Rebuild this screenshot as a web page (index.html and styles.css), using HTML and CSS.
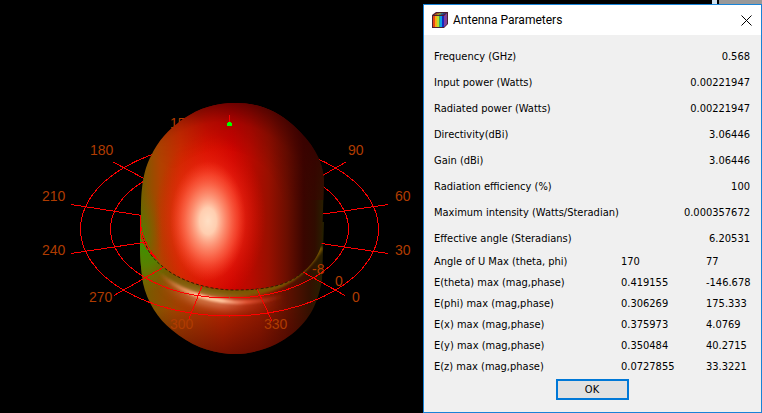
FILE: index.html
```html
<!DOCTYPE html>
<html lang="en">
<head>
<meta charset="utf-8">
<title>Antenna Parameters</title>
<link rel="stylesheet" href="styles.css">
</head>
<body>
<main class="workspace">
  <section class="scene" aria-label="Radiation pattern">
    <svg class="plot" viewBox="0 0 423 413" preserveAspectRatio="xMinYMin meet">
      <defs>
        <linearGradient id="side" gradientUnits="userSpaceOnUse" x1="140" y1="0" x2="324" y2="0">
          <stop offset="0" stop-color="#6a6000"/>
          <stop offset=".04" stop-color="#8a5400"/>
          <stop offset=".11" stop-color="#b04200"/>
          <stop offset=".22" stop-color="#cc2c00"/>
          <stop offset=".36" stop-color="#d41000"/>
          <stop offset=".5" stop-color="#cc0400"/>
          <stop offset=".6" stop-color="#b80a00"/>
          <stop offset=".7" stop-color="#981000"/>
          <stop offset=".8" stop-color="#6a0e00"/>
          <stop offset=".89" stop-color="#3a0600"/>
          <stop offset=".95" stop-color="#300c00"/>
          <stop offset="1" stop-color="#282000"/>
        </linearGradient>
        <radialGradient id="crown" gradientUnits="userSpaceOnUse" cx="0" cy="0" r="1" gradientTransform="translate(222 212) scale(112 112)">
          <stop offset=".55" stop-color="#400000" stop-opacity="0"/>
          <stop offset=".8" stop-color="#400000" stop-opacity=".22"/>
          <stop offset="1" stop-color="#380000" stop-opacity=".7"/>
        </radialGradient>
        <linearGradient id="crownFade" gradientUnits="userSpaceOnUse" x1="175" y1="175" x2="215" y2="130">
          <stop offset="0" stop-color="#000"/>
          <stop offset="1" stop-color="#fff"/>
        </linearGradient>
        <mask id="crownMask"><rect x="130" y="95" width="200" height="105" fill="url(#crownFade)"/></mask>
        <radialGradient id="glow" gradientUnits="userSpaceOnUse" cx="0" cy="0" r="1" gradientTransform="translate(210 218) scale(56 84)">
          <stop offset="0" stop-color="#ff4828" stop-opacity=".85"/>
          <stop offset=".5" stop-color="#ff3820" stop-opacity=".65"/>
          <stop offset="1" stop-color="#e81000" stop-opacity="0"/>
        </radialGradient>
        <radialGradient id="shine" gradientUnits="userSpaceOnUse" cx="0" cy="0" r="1" gradientTransform="translate(208 221) scale(38 60)">
          <stop offset="0" stop-color="#ffdfc4"/>
          <stop offset=".22" stop-color="#ffceb0"/>
          <stop offset=".55" stop-color="#ff9070" stop-opacity=".7"/>
          <stop offset="1" stop-color="#ff5030" stop-opacity="0"/>
        </radialGradient>
        <radialGradient id="leftMoss" gradientUnits="userSpaceOnUse" cx="0" cy="0" r="1" gradientTransform="translate(141 235) scale(22 52)">
          <stop offset="0" stop-color="#508000" stop-opacity=".9"/>
          <stop offset="1" stop-color="#806000" stop-opacity="0"/>
        </radialGradient>
        <linearGradient id="base" gradientUnits="userSpaceOnUse" x1="140" y1="0" x2="324" y2="0">
          <stop offset="0" stop-color="#706000"/>
          <stop offset=".2" stop-color="#a04000"/>
          <stop offset=".45" stop-color="#b02400"/>
          <stop offset=".65" stop-color="#901a00"/>
          <stop offset=".82" stop-color="#581000"/>
          <stop offset=".92" stop-color="#341000"/>
          <stop offset="1" stop-color="#242000"/>
        </linearGradient>
        <linearGradient id="foot" gradientUnits="userSpaceOnUse" x1="0" y1="310" x2="0" y2="356">
          <stop offset="0" stop-color="#400000" stop-opacity="0"/>
          <stop offset="1" stop-color="#400000" stop-opacity=".55"/>
        </linearGradient>
        <radialGradient id="moss" gradientUnits="userSpaceOnUse" cx="0" cy="0" r="1" gradientTransform="translate(146 248) scale(34 44)">
          <stop offset="0" stop-color="#409000"/>
          <stop offset=".4" stop-color="#508800" stop-opacity=".8"/>
          <stop offset="1" stop-color="#707000" stop-opacity="0"/>
        </radialGradient>
        <linearGradient id="glint" gradientUnits="userSpaceOnUse" x1="158" y1="0" x2="285" y2="0">
          <stop offset="0" stop-color="#d08040" stop-opacity="0"/>
          <stop offset=".3" stop-color="#ffc090"/>
          <stop offset=".5" stop-color="#ffc8a0"/>
          <stop offset=".7" stop-color="#f06040" stop-opacity=".7"/>
          <stop offset="1" stop-color="#c03010" stop-opacity="0"/>
        </linearGradient>
        <filter id="soft" x="-20%" y="-50%" width="140%" height="200%"><feGaussianBlur stdDeviation="1"/></filter>
        <filter id="wide" x="-20%" y="-60%" width="140%" height="220%"><feGaussianBlur stdDeviation="4"/></filter>
        <clipPath id="baseClip"><path d="M141 222C139 245 140 263 143 283C147 302 158 319 172 330C190 345 208 352 230 354C258 355 279 344 292 334C311 319 318 302 322 280L324 222Z"/></clipPath>
        <path id="lobe" d="M235 103C258 103 276 110 293 125C312 142 323 160 324 180L322 242C320 253 313 264 303 272C287 286 265 290 235 290C206 290 178 280 162 266C149 252 141 237 141 215C141 188 143 171 151 156C158 141 168 130 183 119C200 108 215 103 235 103Z"/>
      </defs>
      <g class="labels"><text x="170" y="128">150</text></g>
      <g clip-path="url(#baseClip)">
        <rect x="139" y="215" width="187" height="141" fill="url(#base)"/>
        <rect x="139" y="310" width="187" height="46" fill="url(#foot)"/>
        <path d="M150 256C170 285 205 293 236 293C272 292 302 278 320 246" fill="none" stroke="#785400" stroke-width="8" filter="url(#soft)"/>
        <rect x="139" y="200" width="60" height="95" fill="url(#moss)"/>
        <path d="M165 281C185 296 207 302 233 304C254 304 270 301 285 297" fill="none" stroke="url(#glint)" stroke-width="12" opacity=".5" filter="url(#wide)"/>
        <path d="M158 272C178 291 205 300 233 302C254 303 270 300 284 296" fill="none" stroke="url(#glint)" stroke-width="4" filter="url(#soft)"/>
      </g>
      <g class="grid" shape-rendering="crispEdges">
        <ellipse cx="229.500" cy="229" rx="149" ry="87"/>
        <ellipse cx="229.500" cy="229" rx="119" ry="69"/>
        <ellipse cx="229.500" cy="229" rx="89" ry="52"/>
        <path d="M71 204.500L145 216M113 162L145 179M388 204.500L320 214.500M346 162L320 177M388 253.500L318 243"/>
      </g>
      <use href="#lobe" fill="url(#side)"/>
      <use href="#lobe" fill="url(#leftMoss)"/>
      <use href="#lobe" fill="url(#glow)"/>
      <use href="#lobe" fill="url(#shine)"/>
      <g mask="url(#crownMask)"><use href="#lobe" fill="url(#crown)"/></g>
      <path d="M143 236C147 252 154 260 162 266C178 280 206 290 235 290C265 290 287 286 303 272" fill="none" stroke="#302000" stroke-dasharray="3 2"/>
      <g class="grid" shape-rendering="crispEdges">
        <path d="M71 253.500L147 242M114 295.500L164 267M189 319L202 286M257 289L272 321M303 272L345 295.500"/>
        <path d="M229.500 115V123"/>
        <path d="M140.500 215Q139 240 158 260"/>
      </g>
      <path d="M227 123h1v-1h3v1h1v3h-5z" fill="#00ff00"/>
      <g class="labels">
        <text x="90" y="155">180</text>
        <text x="42" y="201">210</text>
        <text x="42" y="255">240</text>
        <text x="89" y="302">270</text>
        <text x="170" y="329">300</text>
        <text x="264" y="329">330</text>
        <text x="312" y="274">-8</text>
        <text x="335" y="286">0</text>
        <text x="352" y="302">0</text>
        <text x="395" y="255">30</text>
        <text x="395" y="201">60</text>
        <text x="348" y="155">90</text>
      </g>
    </svg>
  </section>
  <div class="side">
    <div class="behind"><i class="edge"></i></div>
    <section class="dialog" role="dialog" aria-labelledby="title">
      <header class="titlebar">
        <svg class="app-icon" width="16" height="16" viewBox="0 0 16 16">
          <path d="M0 3L4 0H16V12L12 16H0Z" fill="#4c2030"/>
          <path d="M1 4h2v11H1z" fill="#e84818"/><path d="M3 4h2v11H3z" fill="#f8b010"/>
          <path d="M5 4h2v11H5z" fill="#b8dc30"/><path d="M7 4h1v11H7z" fill="#30b060"/>
          <path d="M8 4h2v11H8z" fill="#10a0e0"/><path d="M10 4h2v11h-2z" fill="#1828c0"/>
          <path d="M2 3L5 1H7L4 3Z" fill="#c05020"/><path d="M4 3L7 1H10L7 3Z" fill="#98a028"/><path d="M7 3L10 1H12L9 3Z" fill="#308890"/><path d="M9 3L12 1H14L11 3Z" fill="#303890"/>
          <path d="M12 4L15 1V12L12 15Z" fill="#80409c"/>
        </svg>
        <h1 id="title">Antenna Parameters</h1>
        <button class="close" type="button" aria-label="Close">
          <svg width="11" height="11" viewBox="0 0 11 11"><path d="M.5.5l10 10M10.500.5l-10 10"/></svg>
        </button>
      </header>
      <div class="content">
        <table class="summary">
          <tr><th scope="row">Frequency (GHz)</th><td>0.568</td></tr>
          <tr><th scope="row">Input power (Watts)</th><td>0.00221947</td></tr>
          <tr><th scope="row">Radiated power (Watts)</th><td>0.00221947</td></tr>
          <tr><th scope="row">Directivity(dBi)</th><td>3.06446</td></tr>
          <tr><th scope="row">Gain (dBi)</th><td>3.06446</td></tr>
          <tr><th scope="row">Radiation efficiency (%)</th><td>100</td></tr>
          <tr><th scope="row">Maximum intensity (Watts/Steradian)</th><td>0.000357672</td></tr>
          <tr><th scope="row">Effective angle (Steradians)</th><td>6.20531</td></tr>
        </table>
        <table class="fields">
          <tr><th scope="row">Angle of U Max (theta, phi)</th><td>170</td><td>77</td></tr>
          <tr><th scope="row">E(theta) max (mag,phase)</th><td>0.419155</td><td>-146.678</td></tr>
          <tr><th scope="row">E(phi) max (mag,phase)</th><td>0.306269</td><td>175.333</td></tr>
          <tr><th scope="row">E(x) max (mag,phase)</th><td>0.375973</td><td>4.0769</td></tr>
          <tr><th scope="row">E(y) max (mag,phase)</th><td>0.350484</td><td>40.2715</td></tr>
          <tr><th scope="row">E(z) max (mag,phase)</th><td>0.0727855</td><td>33.3221</td></tr>
        </table>
        <button class="ok" type="button">OK</button>
      </div>
    </section>
  </div>
</main>
</body>
</html>
```
FILE: styles.css
```css
* { box-sizing: border-box; }
body {
  margin: 0;
  background: #000;
  color: #000;
  font-family: "DejaVu Sans Condensed", "Noto Sans", sans-serif;
  font-size: 11px;
}
.workspace { display: flex; min-height: 100vh; }
.scene { flex: 1 1 0; min-width: 0; }
.plot { display: block; width: 100%; }
.grid { fill: none; stroke: #f00; stroke-width: 1; }
.labels { fill: #b03c00; font: 14px "Liberation Sans", sans-serif; }
.side { flex: 0 0 339px; display: flex; flex-direction: column; }
.behind {
  height: 4px;
  margin-left: 296px;
  background: #999;
}
.edge {
  display: block;
  width: 6px;
  height: 4px;
  background: #cfe0ee;
  border-right: 1px solid #000;
  margin-left: -7px;
}
.dialog {
  flex: 1;
  display: flex;
  flex-direction: column;
  background: #f0f0f0;
  border: 1px solid #1883d7;
}
.titlebar {
  display: flex;
  align-items: center;
  height: 30px;
  padding: 0 9px 0 8px;
  background: #fff;
}
.titlebar h1 {
  flex: 1;
  margin: 0 0 0 5px;
  font: 12px Roboto, sans-serif;
}
.close {
  display: flex;
  padding: 0;
  border: 0;
  background: none;
}
.close path { stroke: #000; stroke-width: 1; fill: none; }
.content {
  display: flex;
  flex-direction: column;
  padding: 9px 11px 0 10px;
}
table { width: 100%; border-collapse: collapse; table-layout: fixed; }
th, td { padding: 0; font-weight: normal; text-align: left; line-height: 14px; white-space: nowrap; }
.summary th { width: 220px; }
.summary tr { height: 26px; }
.summary td { text-align: right; }
.fields { margin-top: -1px; }
.fields tr { height: 21px; }
.fields th { width: 187px; }
.fields td:nth-child(2) { width: 85px; }
.ok {
  align-self: center;
  width: 73px;
  height: 21px;
  margin: 2px 0 0;
  padding: 0;
  border: 2px solid #0078d7;
  background: #e1e1e1;
  color: #000;
  font: inherit;
}
```
